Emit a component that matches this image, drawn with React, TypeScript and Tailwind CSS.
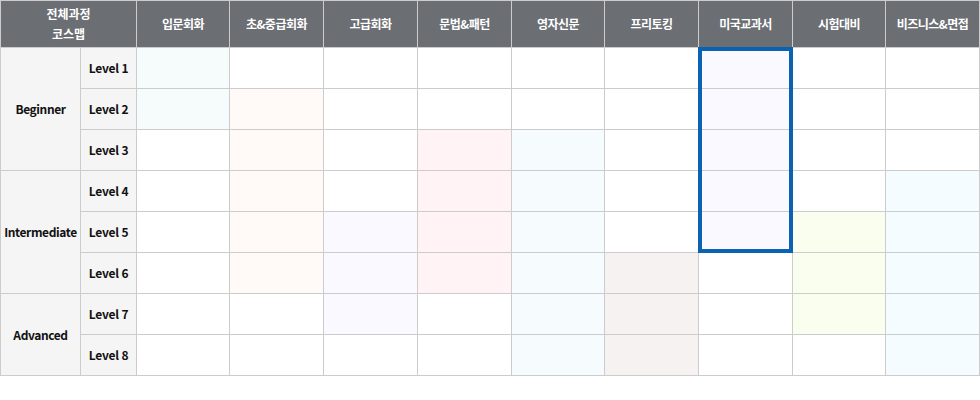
import React from 'react';

const HEADERS = ['입문회화', '초&중급회화', '고급회화', '문법&패턴', '영자신문', '프리토킹', '미국교과서', '시험대비', '비즈니스&면접'];

// which levels (1-8) each course covers, and its tint
const COURSES = [
  { levels: [1, 2], bg: 'bg-[#f6fcfb]' },
  { levels: [2, 3, 4, 5, 6], bg: 'bg-[#fffaf7]' },
  { levels: [5, 6, 7], bg: 'bg-[#f9f9ff]' },
  { levels: [3, 4, 5, 6], bg: 'bg-[#fff3f6]' },
  { levels: [3, 4, 5, 6, 7, 8], bg: 'bg-[#f6fbfd]' },
  { levels: [6, 7, 8], bg: 'bg-[#f5f2f1]' },
  { levels: [1, 2, 3, 4, 5], bg: 'bg-[#f9f9ff]' },
  { levels: [5, 6, 7], bg: 'bg-[#fafeee]' },
  { levels: [4, 5, 6, 7, 8], bg: 'bg-[#f4fcff]' },
];

const GROUPS: Record<number, { name: string; span: string }> = {
  1: { name: 'Beginner', span: 'row-span-3' },
  4: { name: 'Intermediate', span: 'row-span-3' },
  7: { name: 'Advanced', span: 'row-span-2' },
};

const font = { fontFamily: '"Noto Sans CJK KR", "Noto Sans", sans-serif' };

export default function App() {
  const levels = [1, 2, 3, 4, 5, 6, 7, 8];
  return (
    <div className="w-[980px] h-[400px] bg-white" style={font}>
      <div className="relative w-[980px]">
        <div className="grid grid-cols-[79px_55px_92px_93px_93px_93px_92px_93px_93px_92px_93px] grid-rows-[46px_repeat(8,40px)] gap-px bg-[#cccccc] p-px text-[12px] font-bold">
          <div className="col-span-2 bg-[#6b6e73] text-white flex flex-col items-center justify-center leading-[20px]">
            <span>전체과정</span>
            <span>코스맵</span>
          </div>
          {HEADERS.map((h) => (
            <div key={h} className="bg-[#6b6e73] text-white flex items-center justify-center tracking-[-0.5px]">
              {h}
            </div>
          ))}
          {levels.map((lv) => (
            <React.Fragment key={lv}>
              {GROUPS[lv] && (
                <div className={`${GROUPS[lv].span} bg-[#f5f5f5] text-[#111] flex items-center justify-center tracking-[-0.4px]`}>
                  {GROUPS[lv].name}
                </div>
              )}
              <div className="bg-[#f5f5f5] text-[#111] flex items-center justify-center tracking-[-0.2px]">Level {lv}</div>
              {COURSES.map((c, i) => (
                <div key={i} className={c.levels.includes(lv) ? c.bg : 'bg-white'} />
              ))}
            </React.Fragment>
          ))}
        </div>
        {/* highlight frame over 미국교과서 level 1-5 */}
        <div className="absolute left-[698px] top-[47px] w-[95px] h-[206px] border-4 border-[#0b62b3] pointer-events-none" />
      </div>
    </div>
  );
}
